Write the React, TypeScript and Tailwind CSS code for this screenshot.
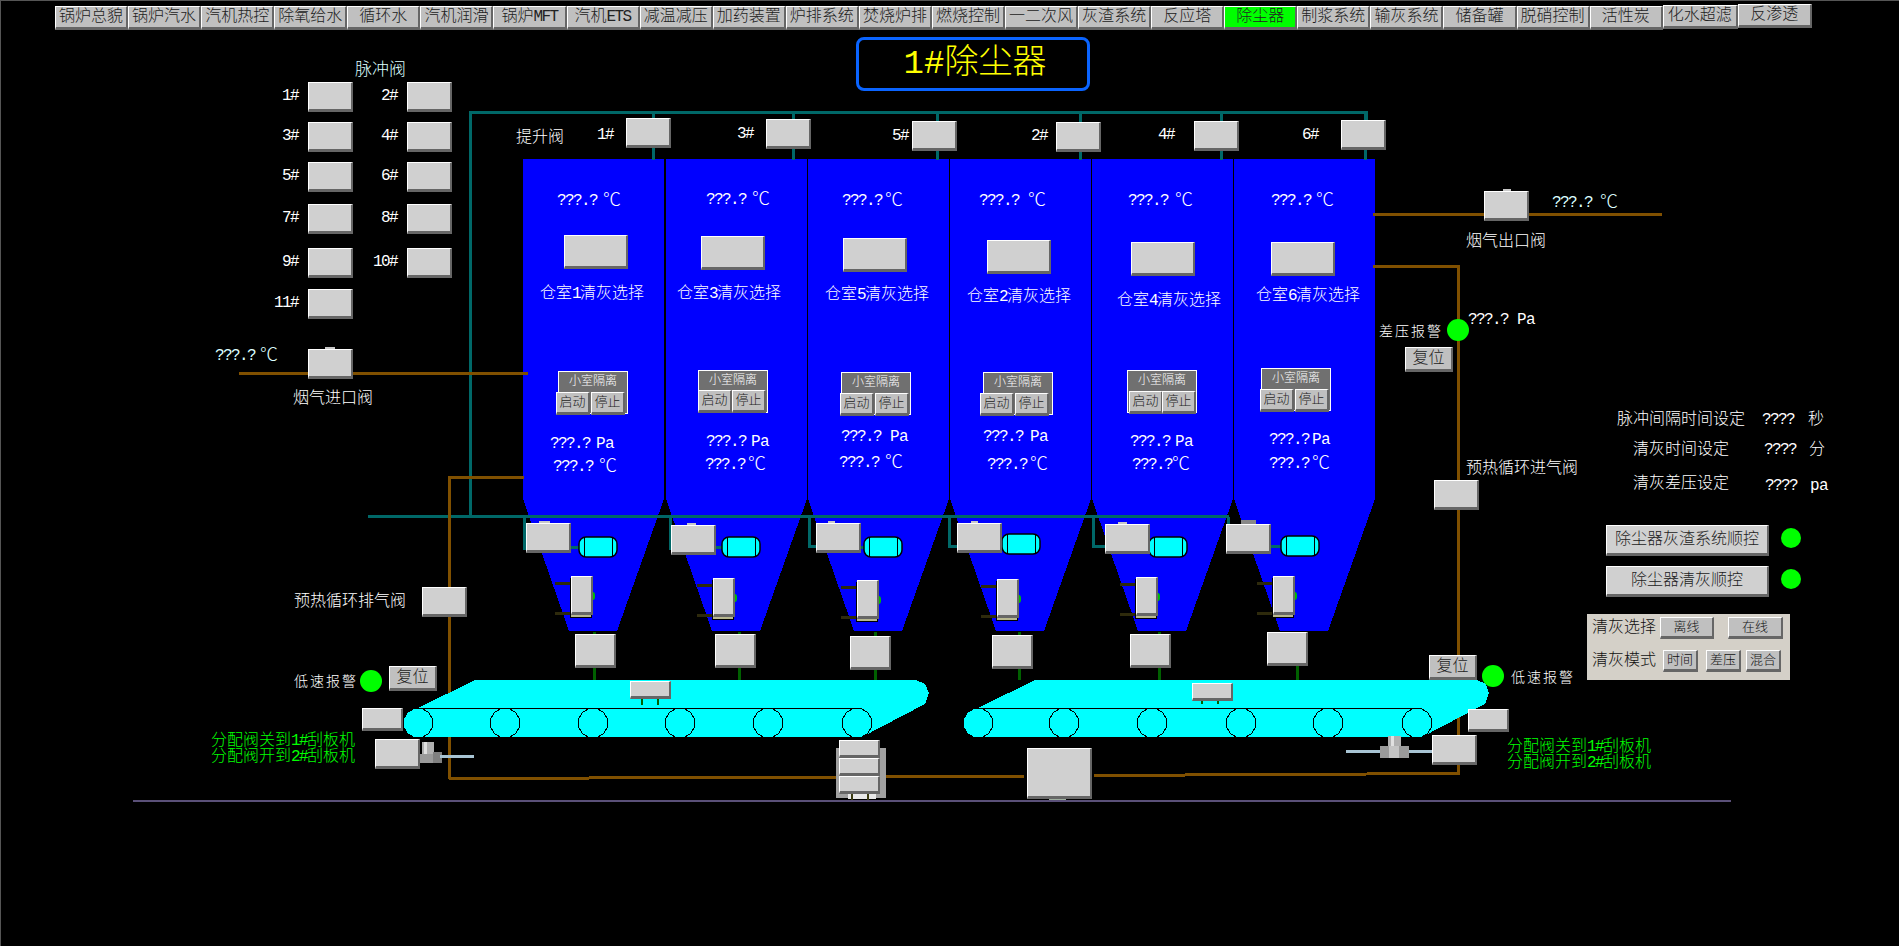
const tabs = [
  "锅炉总貌", "锅炉汽水", "汽机热控", "除氧给水", "循环水", "汽机润滑", "锅炉MFT", "汽机ETS",
  "减温减压", "加药装置", "炉排系统", "焚烧炉排", "燃烧控制", "一二次风", "灰渣系统", "反应塔",
  "除尘器", "制浆系统", "输灰系统", "储备罐", "脱硝控制", "活性炭",
];

const raised = "border-t border-l border-t-white border-l-white border-b-[3px] border-r-2 border-b-[#666] border-r-[#666]";
const smallKey = `flex h-[22px] items-center justify-center bg-[#c0c0c0] text-[13px] leading-none ${raised}`;
const tabBase = `flex h-[24px] items-center justify-center leading-none text-[#222] ${raised}`;
const narrow = "tracking-[-1.6px]";

const pulseRows = [["1#", "2#"], ["3#", "4#"], ["5#", "6#"], ["7#", "8#"], ["9#", "10#"], ["11#"]];

// one entry per chamber, left to right
const chambers = [
  {
    n: 1, x: 523, topX: 626, topY: 118, tagX: 597, tagY: 135, stem: 653, t1: [557, 199, 603], sel: [564, 235], lab: [540, 292],
    iso: [558, 371], start: [556, 392], stop: [591, 392], pa: [550, 442, 596], t2: [553, 465, 599],
    valve: [526, 523], tank: [579, 537], side: [571, 576], low: [575, 634], drop: 594,
  },
  {
    n: 3, x: 666, topX: 766, topY: 119, tagX: 737, tagY: 134, stem: 793, t1: [706, 198, 752], sel: [701, 236], lab: [677, 292],
    iso: [698, 370], start: [698, 390], stop: [732, 390], pa: [706, 440, 751], t2: [705, 463, 748],
    valve: [671, 525], tank: [722, 537], side: [713, 578], low: [715, 634], drop: 739,
  },
  {
    n: 5, x: 808, topX: 912, topY: 121, tagX: 892, tagY: 136, stem: 937, t1: [842, 199, 885], sel: [843, 238], lab: [825, 293],
    iso: [841, 372], start: [840, 393], stop: [875, 393], pa: [841, 435, 890], t2: [839, 461, 885],
    valve: [816, 523], tank: [864, 537], side: [857, 580], low: [850, 636], drop: 875,
  },
  {
    n: 2, x: 950, topX: 1056, topY: 122, tagX: 1031, tagY: 136, stem: 1080, t1: [979, 199, 1028], sel: [987, 240], lab: [967, 295],
    iso: [983, 372], start: [980, 393], stop: [1015, 393], pa: [983, 435, 1030], t2: [987, 463, 1030],
    valve: [957, 523], tank: [1002, 534], side: [997, 579], low: [992, 635], drop: 1019,
  },
  {
    n: 4, x: 1092, topX: 1194, topY: 121, tagX: 1158, tagY: 135, stem: 1221, t1: [1128, 199, 1175], sel: [1131, 242], lab: [1117, 299],
    iso: [1127, 370], start: [1129, 391], stop: [1162, 391], pa: [1130, 440, 1175], t2: [1132, 463, 1172],
    valve: [1105, 524], tank: [1149, 537], side: [1136, 577], low: [1130, 634], drop: 1159,
  },
  {
    n: 6, x: 1234, topX: 1341, topY: 120, tagX: 1302, tagY: 135, stem: 1365, t1: [1271, 199, 1316], sel: [1271, 242], lab: [1256, 294],
    iso: [1261, 368], start: [1260, 389], stop: [1295, 389], pa: [1269, 438, 1312], t2: [1269, 462, 1312],
    valve: [1226, 524], tank: [1281, 536], side: [1273, 576], low: [1267, 632], drop: 1297,
  },
];

const rollersLeft = [418, 505, 593, 680, 768, 857];
const rollersRight = [978, 1064, 1152, 1241, 1328, 1417];

function octagon(cx: number, cy: number, r: number) {
  const pts: string[] = [];
  for (let i = 0; i < 12; i++) {
    const a = (Math.PI * 2 * i) / 12 + Math.PI / 12;
    pts.push(`${(cx + r * Math.cos(a)).toFixed(1)},${(cy + r * Math.sin(a)).toFixed(1)}`);
  }
  return pts.join(" ");
}

function Btn({ x, y, w = 45, h = 30, children, className = "bg-[#d0d0d0]" }: { x: number; y: number; w?: number; h?: number; children?: React.ReactNode; className?: string }) {
  return (
    <div
      className={`absolute flex items-center justify-center text-[#222] ${raised} ${className}`}
      style={{ left: x, top: y, width: w, height: h }}
    >
      {children}
    </div>
  );
}

// y is the vertical centre of the text; the CJK face sits a little high
function T({ x, y, children, className = "text-white" }: { x: number; y: number; children: React.ReactNode; className?: string }) {
  return (
    <div className={`absolute -translate-y-1/2 whitespace-nowrap leading-none ${className}`} style={{ left: x, top: y + 2 }}>
      {children}
    </div>
  );
}

// narrow latin inside a CJK label
function N({ children }: { children: React.ReactNode }) {
  return <span className={narrow}>{children}</span>;
}

function Dot({ x, y, r = 11 }: { x: number; y: number; r?: number }) {
  return <div className="absolute rounded-full bg-[#00ff00]" style={{ left: x - r, top: y - r, width: r * 2, height: r * 2 }} />;
}

function Reading({ x, y, deg, unit = "℃", color = "text-white" }: { x: number; y: number; deg: number; unit?: string; color?: string }) {
  return (
    <>
      <T x={x} y={y} className={`${color} ${narrow}`}>???.?</T>
      <T x={deg} y={y} className={`${color} ${unit === "℃" ? "text-[18px]" : "tracking-[-0.6px]"}`}>{unit}</T>
    </>
  );
}

function Diagram() {
  return (
    <svg className="absolute inset-0" width="1899" height="946" shapeRendering="crispEdges">
      {/* hoppers */}
      {chambers.map((c) => (
        <polygon
          key={c.n}
          points={`${c.x},159 ${c.x + 141},159 ${c.x + 141},499 ${c.x + 94},631 ${c.x + 46},631 ${c.x},499`}
          fill="#0000ff"
        />
      ))}

      {/* teal air lines */}
      <g stroke="#006868" strokeWidth="3" fill="none" transform="translate(0.5 0.5)">
        <polyline points="470,516 470,112 1366,112 1366,120" />
        <line x1="367" y1="516" x2="1228" y2="516" />
        {chambers.map((c) => (
          <line key={c.n} x1={c.stem} y1="112" x2={c.stem} y2="159" />
        ))}
        <polyline points="524,516 524,548 530,548" />
        <polyline points="670,516 670,548 675,548" />
        <polyline points="809,516 809,546 820,546" />
        <polyline points="949,516 949,546 960,546" />
        <polyline points="1093,516 1093,546 1108,546" />
        <line x1="1228" y1="516" x2="1228" y2="524" />
        {chambers.map((c) => (
          <line key={c.n} x1={c.valve[0] + 44} y1={c.tank[1] + 10} x2={c.tank[0] + 2} y2={c.tank[1] + 10} />
        ))}
      </g>

      {/* brown flue lines */}
      <g stroke="#805000" strokeWidth="3" fill="none" transform="translate(0.5 0.5)">
        <line x1="238" y1="373" x2="527" y2="373" />
        <polyline points="523,477 449,477 449,778" />
        <polyline points="449,778 1024,776" />
        <polyline points="1094,775 1458,773 1458,266 1372,266" />
        <line x1="1372" y1="214" x2="1661" y2="214" />
      </g>

      {/* bottom rail */}
      <rect x="133" y="800" width="1598" height="2" fill="#5a5078" />

      {/* domes on the valves */}
      <g fill="#c8c8c8">
        <rect x="325" y="347" width="10" height="3" />
        <rect x="1503" y="189" width="8" height="3" />
        <rect x="539" y="521" width="11" height="3" />
        <rect x="687" y="523" width="9" height="3" />
        <rect x="828" y="521" width="7" height="3" />
        <rect x="971" y="521" width="7" height="3" />
        <rect x="1118" y="522" width="9" height="3" />
      </g>
      <rect x="1241" y="520" width="15" height="5" fill="#888" />

      {/* tanks and side cylinders */}
      {chambers.map((c) => (
        <g key={c.n}>
          <rect x={c.tank[0]} y={c.tank[1]} width="38" height="20" rx="7" fill="#00ffff" stroke="#000" strokeWidth="1.5" shapeRendering="auto" />
          <line x1={c.tank[0] + 5} y1={c.tank[1]} x2={c.tank[0] + 5} y2={c.tank[1] + 20} stroke="#000" />
          <line x1={c.tank[0] + 33} y1={c.tank[1]} x2={c.tank[0] + 33} y2={c.tank[1] + 20} stroke="#000" />
          <rect x={c.side[0] - 16} y={c.side[1] + 6} width="16" height="3" fill="#2e2a0c" />
          <rect x={c.side[0] - 16} y={c.side[1] + 36} width="16" height="3" fill="#2e2a0c" />
          <rect x={c.side[0] - 1} y={c.side[1] + 2} width="21" height="39" fill="#b8b890" stroke="#000" />
          <ellipse cx={c.side[0] + 22} cy={c.side[1] + 20} rx="2" ry="4" fill="#00c000" shapeRendering="auto" />
          <rect x={c.drop - 1} y="632" width="3" height="4" fill="#006000" />
          <rect x={c.drop - 1} y={c.low[1] + 33} width="3" height={680 - c.low[1] - 33} fill="#006000" />
        </g>
      ))}

      {/* conveyors */}
      <g fill="#00ffff">
        <polygon points="418,708 475,680 916,680 925,684 929,693 925,704 862,737 418,737" />
        <polygon points="978,708 1035,680 1477,680 1486,684 1489,693 1485,704 1422,737 978,737" />
      </g>
      <rect x="418" y="708" width="439" height="1" fill="#000" />
      <rect x="978" y="708" width="440" height="1" fill="#000" />
      {rollersLeft.concat(rollersRight).map((x) => (
        <polygon key={x} points={octagon(x, 723, 15)} fill="#00ffff" stroke="#000" />
      ))}
      <g fill="#006000">
        <rect x="641" y="699" width="2" height="6" />
        <rect x="657" y="699" width="2" height="6" />
        <rect x="1201" y="701" width="2" height="3" />
        <rect x="1217" y="701" width="2" height="3" />
      </g>

      {/* diverter taps */}
      <g fill="#9a9a9a">
        <rect x="422" y="742" width="12" height="13" fill="#b0b0b0" />
        <rect x="424" y="742" width="3" height="13" fill="#e0e0e0" />
        <rect x="420" y="754" width="13" height="9" />
        <rect x="433" y="752" width="9" height="11" fill="#808080" />
        <rect x="1388" y="736" width="13" height="13" fill="#b0b0b0" />
        <rect x="1391" y="736" width="3" height="13" fill="#e0e0e0" />
        <rect x="1380" y="746" width="29" height="12" />
        <rect x="1389" y="746" width="10" height="12" fill="#c4c4c4" />
      </g>
      <rect x="440" y="755" width="34" height="3" fill="#a8c4d4" />
      <rect x="1346" y="750" width="34" height="3" fill="#a8c4d4" />
      <rect x="1409" y="750" width="23" height="3" fill="#a8c4d4" />

      {/* stack behind the centre feeder */}
      <rect x="836" y="748" width="50" height="50" fill="#a0a0a0" />
      <rect x="848" y="794" width="28" height="5" fill="#e8e8e8" />
      <rect x="851" y="793" width="2" height="7" fill="#3a3a10" />
      <rect x="867" y="793" width="2" height="7" fill="#3a3a10" />
      <rect x="1049" y="798" width="17" height="2" fill="#a0b0a0" />
    </svg>
  );
}

export default function App() {
  return (
    <div className="relative h-[946px] w-[1899px] overflow-hidden bg-black shadow-[inset_1px_1px_0_#555] [font-family:'Liberation_Mono','Noto_Sans_CJK_SC',monospace] text-[16px] font-light">
      <Diagram />

      {/* top menu */}
      <nav className="relative flex items-start pl-[55px] pt-[6px]">
        {tabs.map((t) => (
          <div key={t} className={`${tabBase} w-[73.09px] border-r-0 ${t === "除尘器" ? "bg-[#00ff00]" : "bg-[#c0c0c0]"}`}>
            {t.slice(0, 2)}
            {/[A-Z]/.test(t) ? <N>{t.slice(2)}</N> : t.slice(2)}
          </div>
        ))}
        <div className={`${tabBase} -mt-px w-[75px] bg-[#c0c0c0]`}>化水超滤</div>
        <div className={`${tabBase} -mt-[2px] w-[74px] bg-[#c0c0c0]`}>反渗透</div>
      </nav>

      {/* title */}
      <div className="absolute left-[856px] top-[37px] flex h-[54px] w-[234px] items-center justify-center rounded-[8px] border-[3px] border-[#0a64ff] pl-[4px] text-[34px] leading-none text-[#ffff00]">
        1#除尘器
      </div>

      {/* pulse valves */}
      <T x={355} y={68} className="text-[#dff] text-[17px]">脉冲阀</T>
      <div className="absolute left-[270px] top-[82px] grid grid-cols-[38px_45px_54px_45px] grid-rows-[40px_40px_42px_44px_41px_30px] items-start leading-none text-white">
        {pulseRows.map((row) =>
          row.map((label) => (
            <div key={label} className="contents">
              <div className={`h-[30px] self-start justify-self-end pr-[10px] pt-[6px] ${narrow}`}>{label}</div>
              <div className={`h-[30px] w-[45px] bg-[#d0d0d0] ${raised}`} />
            </div>
          )),
        )}
      </div>

      <T x={516} y={136}>提升阀</T>

      {/* chambers */}
      {chambers.map((c) => (
        <div key={c.n}>
          <T x={c.tagX} y={c.tagY - 2} className={`text-white ${narrow}`}>{c.n}#</T>
          <Btn x={c.topX} y={c.topY} />
          <Reading x={c.t1[0]} y={c.t1[1]} deg={c.t1[2]} />
          <Btn x={c.sel[0]} y={c.sel[1]} w={64} h={34} />
          <T x={c.lab[0]} y={c.lab[1]}>仓室<N>{c.n}</N>清灰选择</T>

          <div
            className="absolute flex h-[43px] w-[70px] justify-center border border-white bg-[#707070] pt-[1px] text-[12px] leading-[19px] text-white"
            style={{ left: c.iso[0], top: c.iso[1] }}
          >
            小室隔离
          </div>
          <Btn x={c.start[0]} y={c.start[1]} w={34} h={23} className="bg-[#c0c0c0] text-[13px] leading-none">启动</Btn>
          <Btn x={c.stop[0]} y={c.stop[1]} w={34} h={23} className="bg-[#c0c0c0] text-[13px] leading-none">停止</Btn>

          <Reading x={c.pa[0]} y={c.pa[1]} deg={c.pa[2]} unit="Pa" />
          <Reading x={c.t2[0]} y={c.t2[1]} deg={c.t2[2]} />

          <Btn x={c.valve[0]} y={c.valve[1]} />
          <Btn x={c.side[0]} y={c.side[1]} w={22} h={39} />
          <Btn x={c.low[0]} y={c.low[1]} w={41} h={34} />
        </div>
      ))}

      {/* left side */}
      <Reading x={215} y={354} deg={260} color="text-[#dff]" />
      <Btn x={308} y={349} />
      <T x={293} y={397}>烟气进口阀</T>
      <T x={294} y={600}>预热循环排气阀</T>
      <Btn x={422} y={587} />
      <T x={294} y={680} className="text-white text-[14px] tracking-[2px]">低速报警</T>
      <Dot x={371} y={681} />
      <Btn x={389} y={666} w={48} h={25} className="bg-[#c0c0c0]">复位</Btn>
      <Btn x={362} y={708} w={41} h={23} />
      <Btn x={375} y={739} />
      <T x={211} y={739} className="text-[#00ff00]">分配阀关到<N>1#</N>刮板机</T>
      <T x={211} y={755} className="text-[#00ff00]">分配阀开到<N>2#</N>刮板机</T>

      {/* conveyor head units */}
      <Btn x={630} y={681} w={41} h={18} />
      <Btn x={1192} y={683} w={41} h={18} />
      <Btn x={839} y={740} w={41} h={18} />
      <Btn x={839} y={758} w={41} h={18} />
      <Btn x={839} y={776} w={41} h={18} />
      <Btn x={1027} y={748} w={65} h={51} />

      {/* right side */}
      <Btn x={1484} y={191} />
      <Reading x={1552} y={201} deg={1600} color="text-[#dff]" />
      <T x={1466} y={240}>烟气出口阀</T>
      <T x={1379} y={330} className="text-white text-[14px] tracking-[2px]">差压报警</T>
      <Dot x={1458} y={330} />
      <Reading x={1468} y={318} deg={1517} unit="Pa" />
      <Btn x={1405} y={347} w={48} h={25} className="bg-[#c0c0c0]">复位</Btn>
      <T x={1466} y={467}>预热循环进气阀</T>
      <Btn x={1434} y={480} />
      <Btn x={1429} y={655} w={48} h={25} className="bg-[#c0c0c0]">复位</Btn>
      <Dot x={1493} y={676} />
      <T x={1511} y={676} className="text-white text-[14px] tracking-[2px]">低速报警</T>
      <Btn x={1468} y={709} w={41} h={23} />
      <Btn x={1432} y={735} />
      <T x={1507} y={745} className="text-[#00ff00]">分配阀关到<N>1#</N>刮板机</T>
      <T x={1507} y={761} className="text-[#00ff00]">分配阀开到<N>2#</N>刮板机</T>

      {/* settings */}
      <div className="absolute left-[1617px] top-[405px] grid grid-cols-[128px_46px_auto] grid-rows-[30px_30px_38px] items-center gap-x-0 leading-none text-white">
        <span className="text-center">脉冲间隔时间设定</span>
        <span className={`pl-[17px] ${narrow}`}>????</span>
        <span className="pl-[17px]">秒</span>
        <span className="text-center">清灰时间设定</span>
        <span className={`pl-[19px] ${narrow}`}>????</span>
        <span className="pl-[18px]">分</span>
        <span className="text-center">清灰差压设定</span>
        <span className={`pl-[20px] pt-[3px] ${narrow}`}>????</span>
        <span className="pl-[19px] pt-[3px] tracking-[-0.6px]">pa</span>
      </div>

      {/* sequence buttons */}
      <div className="absolute left-[1606px] top-[525px] flex flex-col gap-[10px]">
        {["除尘器灰渣系统顺控", "除尘器清灰顺控"].map((label) => (
          <div key={label} className="flex items-center gap-[12px]">
            <div className={`flex h-[31px] w-[163px] items-center justify-center bg-[#d0d0d0] text-[#222] ${raised}`}>{label}</div>
            <div className="-mt-[6px] h-[20px] w-[20px] rounded-full bg-[#00ff00]" />
          </div>
        ))}
      </div>

      {/* cleaning mode panel */}
      <div className="absolute left-[1587px] top-[614px] flex h-[66px] w-[203px] flex-col gap-[9px] bg-[#d4d0c8] pl-[5px] pt-[2px] text-[#111]">
        <div className="flex items-center">
          <span className="w-[68px]">清灰选择</span>
          <div className={`${smallKey} w-[54px]`}>离线</div>
          <div className={`${smallKey} ml-[14px] w-[55px]`}>在线</div>
        </div>
        <div className="flex items-center">
          <span className="w-[71px]">清灰模式</span>
          <div className={`${smallKey} w-[35px]`}>时间</div>
          <div className={`${smallKey} ml-[8px] w-[35px]`}>差压</div>
          <div className={`${smallKey} ml-[5px] w-[35px]`}>混合</div>
        </div>
      </div>
    </div>
  );
}
